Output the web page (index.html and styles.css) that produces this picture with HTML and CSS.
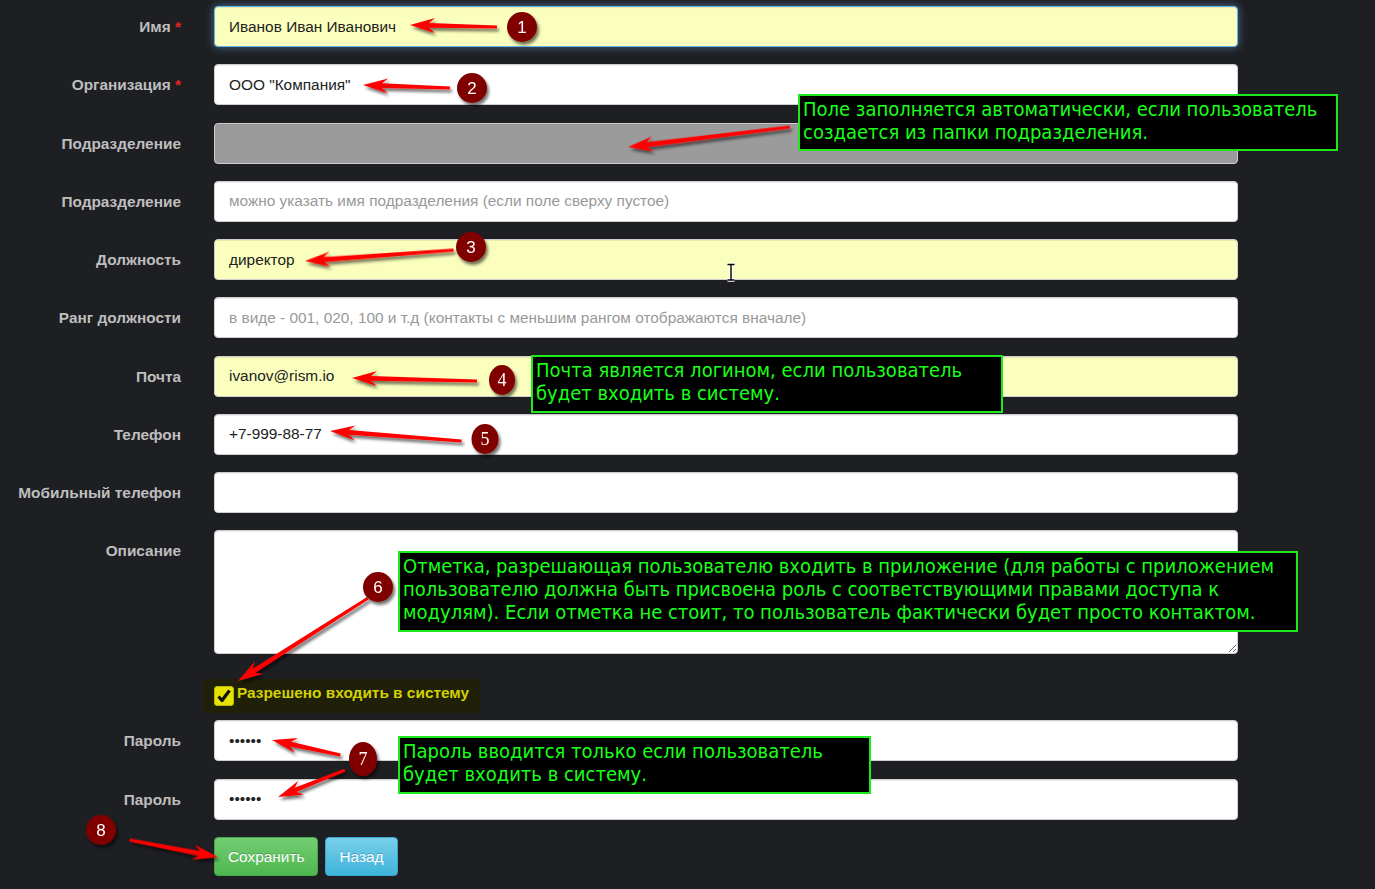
FILE: index.html
```html
<!DOCTYPE html>
<html lang="ru">
<head>
<meta charset="utf-8">
<title>Пользователь</title>
<link rel="stylesheet" href="styles.css">
</head>
<body>
<form class="form">
  <div class="row"><label class="lbl">Имя <span class="req">*</span></label><div class="ctl"><input class="inp auto focus" value="Иванов Иван Иванович"></div></div>
  <div class="row"><label class="lbl">Организация <span class="req">*</span></label><div class="ctl"><input class="inp" value="ООО &quot;Компания&quot;"></div></div>
  <div class="row"><label class="lbl">Подразделение</label><div class="ctl"><input class="inp disabled" disabled></div></div>
  <div class="row"><label class="lbl">Подразделение</label><div class="ctl"><input class="inp" placeholder="можно указать имя подразделения (если поле сверху пустое)"></div></div>
  <div class="row"><label class="lbl">Должность</label><div class="ctl"><input class="inp auto" value="директор"></div></div>
  <div class="row"><label class="lbl">Ранг должности</label><div class="ctl"><input class="inp" placeholder="в виде - 001, 020, 100 и т.д (контакты с меньшим рангом отображаются вначале)"></div></div>
  <div class="row"><label class="lbl">Почта</label><div class="ctl"><input class="inp auto" value="ivanov@rism.io"></div></div>
  <div class="row"><label class="lbl">Телефон</label><div class="ctl"><input class="inp" value="+7-999-88-77"></div></div>
  <div class="row"><label class="lbl">Мобильный телефон</label><div class="ctl"><input class="inp"></div></div>
  <div class="row row-area"><label class="lbl">Описание</label><div class="ctl"><textarea class="inp area"></textarea></div></div>
  <div class="row row-check"><div class="lbl"></div><div class="ctl"><label class="check"><span class="cbox"><svg width="16" height="16" viewBox="0 0 16 16"><path d="M2.5 8.5 L6 12.5 L13.5 2.5" fill="none" stroke="#111" stroke-width="3.2" stroke-linejoin="round"/></svg></span><span class="check-text">Разрешено входить в систему</span></label></div></div>
  <div class="row"><label class="lbl">Пароль</label><div class="ctl"><input class="inp" type="password" value="123456"></div></div>
  <div class="row row-last"><label class="lbl">Пароль</label><div class="ctl"><input class="inp" type="password" value="123456"></div></div>
  <div class="row"><div class="lbl"></div><div class="ctl actions"><button type="button" class="btn btn-success">Сохранить</button><button type="button" class="btn btn-info">Назад</button></div></div>
</form>

<div class="note n1">Поле заполняется автоматически, если пользователь<br>создается из папки подразделения.</div>
<div class="note n2">Почта является логином, если пользователь<br>будет входить в систему.</div>
<div class="note n3">Отметка, разрешающая пользователю входить в приложение (для работы с приложением<br>пользователю должна быть присвоена роль с соответствующими правами доступа к<br>модулям). Если отметка не стоит, то пользователь фактически будет просто контактом.</div>
<div class="note n4">Пароль вводится только если пользователь<br>будет входить в систему.</div>

<svg class="annot" width="1375" height="889" viewBox="0 0 1375 889">
  <defs>
    <filter id="sh" x="-10%" y="-10%" width="120%" height="120%">
      <feDropShadow dx="2" dy="3" stdDeviation="1.6" flood-color="#000" flood-opacity="0.55"/>
    </filter>
  </defs>
  <g fill="#ff0000" filter="url(#sh)">
    <polygon transform="translate(410 25) rotate(181.3)" points="-87,-1.5 -19,-2.4 -25,-7.5 0,0 -25,7.5 -19,2.4 -87,1.5"/>
    <polygon transform="translate(363 85) rotate(182)" points="-87,-1.5 -19,-2.4 -25,-7.5 0,0 -25,7.5 -19,2.4 -87,1.5"/>
    <polygon transform="translate(305 261) rotate(175.8)" points="-149,-1.5 -19,-2.4 -25,-7.5 0,0 -25,7.5 -19,2.4 -149,1.5"/>
    <polygon transform="translate(352 378) rotate(181.4)" points="-125,-1.5 -19,-2.4 -25,-7.5 0,0 -25,7.5 -19,2.4 -125,1.5"/>
    <polygon transform="translate(330 431) rotate(184.3)" points="-132,-1.5 -19,-2.4 -25,-7.5 0,0 -25,7.5 -19,2.4 -132,1.5"/>
    <polygon transform="translate(628 147) rotate(172.96)" points="-163,-1.5 -19,-2.4 -25,-7.5 0,0 -25,7.5 -19,2.4 -163,1.5"/>
    <polygon transform="translate(238 681) rotate(147.45)" points="-154,-1.5 -19,-2.4 -25,-7.5 0,0 -25,7.5 -19,2.4 -154,1.5"/>
    <polygon transform="translate(272 740) rotate(192.4)" points="-70,-1.5 -19,-2.4 -25,-7.5 0,0 -25,7.5 -19,2.4 -70,1.5"/>
    <polygon transform="translate(278 797) rotate(158.05)" points="-72,-1.5 -19,-2.4 -25,-7.5 0,0 -25,7.5 -19,2.4 -72,1.5"/>
    <polygon transform="translate(218 857) rotate(10.9)" points="-90,-1.5 -19,-2.4 -25,-7.5 0,0 -25,7.5 -19,2.4 -90,1.5"/>
  </g>
  <g fill="#800000" filter="url(#sh)">
    <circle cx="522" cy="27" r="15"/>
    <circle cx="472" cy="88" r="15"/>
    <circle cx="471" cy="247" r="15"/>
    <ellipse cx="502" cy="380" rx="13" ry="15"/>
    <ellipse cx="485" cy="439" rx="13.5" ry="15"/>
    <circle cx="378" cy="587" r="15"/>
    <ellipse cx="363" cy="759" rx="14" ry="17"/>
    <circle cx="101" cy="830" r="15"/>
  </g>
  <g class="num" fill="#fff" text-anchor="middle">
    <text x="522" y="33">1</text>
    <text x="472" y="94">2</text>
    <text x="471" y="253">3</text>
    <text class="serif" x="502" y="386">4</text>
    <text class="serif" x="485" y="445">5</text>
    <text x="378" y="593">6</text>
    <text class="serif" x="363" y="765">7</text>
    <text x="101" y="836">8</text>
  </g>
  <g class="cursor">
    <path d="M727.5 264.5h7M731 264.5v15.5M727.5 280h7" stroke="#fff" stroke-width="3.5" fill="none"/>
    <path d="M727.5 264.5h7M731 264.5v15.5M727.5 280h7" stroke="#000" stroke-width="1.4" fill="none"/>
  </g>
</svg>
</body>
</html>
```

FILE: styles.css
```css
html, body {
  margin: 0;
  padding: 0;
}
body {
  background: #1e1f23;
  font-family: "Liberation Sans", Arial, sans-serif;
  font-size: 15.4px;
  position: relative;
  width: 1375px;
  height: 889px;
  overflow: hidden;
}
.form {
  padding-top: 6px;
}
.row {
  display: flex;
  margin-bottom: 17.25px;
}
.lbl {
  width: 214px;
  flex: none;
  box-sizing: border-box;
  padding-right: 33px;
  text-align: right;
  font-weight: bold;
  color: #bebebe;
  line-height: 41px;
}
.req {
  color: #e8231f;
}
.ctl {
  width: 1024px;
  flex: none;
}
.inp {
  display: block;
  width: 100%;
  height: 41px;
  box-sizing: border-box;
  border: 1px solid #cfcfcf;
  border-radius: 4px;
  padding: 0 14px;
  margin: 0;
  font: 15.4px "Liberation Sans", Arial, sans-serif;
  color: #222;
  background: #fff;
  box-shadow: inset 0 1px 1px rgba(0, 0, 0, .075);
  outline: none;
}
.inp::placeholder {
  color: #999;
}
.auto {
  background: #faffbd;
}
.focus {
  border-color: #66afe9;
  box-shadow: inset 0 1px 1px rgba(0, 0, 0, .075), 0 0 8px rgba(102, 175, 233, .6);
}
.disabled {
  background: #9b9b9b;
}
.area {
  height: 124px;
  padding: 10px 14px;
  resize: vertical;
}
.row-area {
  margin-bottom: 25px;
}
.row-check {
  margin-bottom: 7px;
}
.row-last {
  margin-bottom: 17.5px;
}
.check {
  display: inline-flex;
  align-items: flex-start;
  gap: 3px;
  height: 34px;
  box-sizing: border-box;
  padding: 7px 11px 0;
  margin-left: -11px;
  background: #202008;
  color: #d2d200;
  font-weight: bold;
}
.cbox {
  width: 20px;
  height: 20px;
  box-sizing: border-box;
  border-radius: 3px;
  background: #e4e400;
  border: 1px solid #b8b800;
  display: flex;
  align-items: center;
  justify-content: center;
}
.check-text {
  line-height: 16px;
  margin-top: -1px;
}
.actions {
  display: flex;
  gap: 7px;
}
.btn {
  height: 39px;
  padding: 0 13px;
  border-radius: 4px;
  color: #fff;
  font: 15.4px "Liberation Sans", Arial, sans-serif;
  border: 1px solid;
  text-shadow: 0 -1px 0 rgba(0, 0, 0, .2);
  cursor: pointer;
}
.btn-success {
  background: linear-gradient(#73cd73, #4fb74f);
  border-color: #47a847;
}
.btn-info {
  background: linear-gradient(#79cfea, #3fb4db);
  border-color: #36a8cf;
}
.note {
  position: absolute;
  box-sizing: border-box;
  background: #000;
  border: 2px solid #1ee81e;
  color: #1aff1a;
  font-family: "DejaVu Sans Condensed", "DejaVu Sans", sans-serif;
  font-stretch: condensed;
  font-size: 20px;
  line-height: 23px;
  padding: 2px 3px;
  white-space: nowrap;
  overflow: hidden;
}
.n1 { left: 798px; top: 94px; width: 540px; height: 57px; }
.n2 { left: 531px; top: 355px; width: 472px; height: 58px; }
.n3 { left: 398px; top: 551px; width: 900px; height: 81px; }
.n4 { left: 398px; top: 736px; width: 473px; height: 58px; }
.annot {
  position: absolute;
  left: 0;
  top: 0;
  pointer-events: none;
}
.num text {
  font-family: "Liberation Sans", Arial, sans-serif;
  font-size: 17px;
}
.num text.serif {
  font-family: "Liberation Serif", "Times New Roman", serif;
  font-size: 18px;
}
```
